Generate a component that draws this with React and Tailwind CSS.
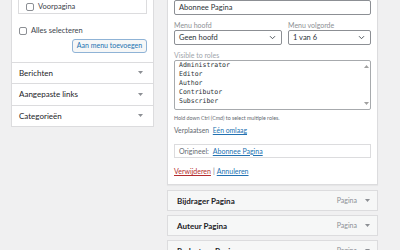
import React from 'react';

const font = { fontFamily: 'Lato, "Noto Sans", sans-serif' };

const Caret = () => (
  <svg width="5" height="3" viewBox="0 0 5 3">
    <path d="M0 0h5L2.5 3z" fill="#8c8f94" />
  </svg>
);

const Chevron = () => (
  <svg width="7" height="5" viewBox="0 0 7 5" fill="none">
    <path d="M1 1.2l2.5 2.5 2.5-2.5" stroke="#50575e" strokeWidth="1" />
  </svg>
);

const Box = () => (
  <span className="inline-block w-[8px] h-[8px] border border-[#8c8f94] rounded-[2px] bg-white shrink-0" />
);

const AccRow = ({ label }) => (
  <div className="flex items-center justify-between h-[21.5px] pl-[7px] pr-[10px] border-t border-[#dcdcde]">
    <span className="text-[8px] text-[#1d2327]">{label}</span>
    <Caret />
  </div>
);

const Item = ({ label }) => (
  <div className="flex items-center h-[21px] pl-[9px] pr-[7px] bg-[#f6f7f7] border border-[#dcdcde]">
    <span className="text-[8px] font-bold text-[#1d2327] flex-1">{label}</span>
    <span className="text-[7px] text-[#8c8f94] mr-[8px]">Pagina</span>
    <Caret />
  </div>
);

const roles = ['Administrator', 'Editor', 'Author', 'Contributor', 'Subscriber'];

export default function App() {
  return (
    <div className="w-[400px] h-[250px] overflow-hidden bg-[#f0f0f1] flex items-start" style={font}>
      <div className="ml-[11px] w-[143px] h-[127px] bg-white border-x border-b border-[#dcdcde] flex flex-col">
        <div className="mx-[6px] h-[18px] border-x border-b border-[#dcdcde] flex items-center pl-[7px] gap-[4px]">
          <Box />
          <span className="text-[7.5px] text-[#3c434a]">Voorpagina</span>
        </div>
        <div className="flex items-center gap-[4px] pl-[7px] mt-[11px]">
          <Box />
          <span className="text-[7.5px] text-[#3c434a]">Alles selecteren</span>
        </div>
        <div className="flex justify-end pr-[6px] mt-[2px]">
          <div className="h-[14px] w-[75px] flex items-center justify-center rounded-[3px] border border-[#8fb3d6] bg-[#f6f7f7] text-[7px] text-[#2271b1]">
            Aan menu toevoegen
          </div>
        </div>
        <div className="mt-[9px]">
          <AccRow label="Berichten" />
          <AccRow label="Aangepaste links" />
          <AccRow label="Categorieën" />
        </div>
      </div>

      <div className="ml-[13px] w-[211px] flex flex-col">
        <div className="bg-white border-x border-b border-[#dcdcde] px-[6px] pb-[8px] shadow-[0_1px_1px_rgba(0,0,0,0.04)]">
          <div className="h-[15px] border border-[#8c8f94] rounded-[2px] flex items-center pl-[4px] text-[7.5px] text-[#2c3338]">
            Abonnee Pagina
          </div>
          <div className="flex gap-[6px] mt-[5px]">
            <div className="w-[108px]">
              <div className="h-[10px] text-[7px] text-[#8c8f94] leading-[10px]">Menu hoofd</div>
              <div className="h-[15px] border border-[#8c8f94] rounded-[2px] flex items-center justify-between pl-[4px] pr-[5px] text-[7.5px] text-[#2c3338]">
                <span>Geen hoofd</span>
                <Chevron />
              </div>
            </div>
            <div className="flex-1">
              <div className="h-[10px] text-[7px] text-[#8c8f94] leading-[10px]">Menu volgorde</div>
              <div className="h-[15px] border border-[#8c8f94] rounded-[2px] flex items-center justify-between pl-[4px] pr-[5px] text-[7.5px] text-[#2c3338]">
                <span>1 van 6</span>
                <Chevron />
              </div>
            </div>
          </div>
          <div className="h-[10px] mt-[5px] text-[7px] text-[#a0a5aa] leading-[10px]">Visible to roles</div>
          <div className="h-[50px] border border-[#a7aaad] rounded-[2px] flex">
            <div className="flex-1 pl-[4px]" style={{ fontFamily: '"DejaVu Sans Mono", monospace' }}>
              {roles.map((r) => (
                <div key={r} className="text-[6.5px] leading-[9px] text-[#2c3338]">{r}</div>
              ))}
            </div>
            <div className="w-[8px] flex flex-col items-center justify-between py-[4px]">
              <svg width="5" height="3" viewBox="0 0 5 3"><path d="M0 3h5L2.5 0z" fill="#a0a0a0" /></svg>
              <svg width="5" height="3" viewBox="0 0 5 3"><path d="M0 0h5L2.5 3z" fill="#a0a0a0" /></svg>
            </div>
          </div>
          <div className="mt-[4px] text-[5.3px] leading-[8px] text-[#646970]">Hold down Ctrl (Cmd) to select multiple roles.</div>
          <div className="mt-[3px] text-[6.8px] leading-[10px] text-[#646970]">
            Verplaatsen <span className="ml-[2px] text-[#2271b1] underline">Eén omlaag</span>
          </div>
          <div className="mt-[9px] h-[14px] border border-[#dcdcde] flex items-center pl-[4px] text-[7px] text-[#646970]">
            Origineel: <span className="ml-[4px] text-[#2271b1] underline">Abonnee Pagina</span>
          </div>
          <div className="mt-[8px] text-[7px] leading-[10px]">
            <span className="text-[#b32d2e] underline">Verwijderen</span>
            <span className="text-[#646970] mx-[2px]">|</span>
            <span className="text-[#2271b1] underline">Annuleren</span>
          </div>
        </div>
        <div className="mt-[5px] flex flex-col gap-[4px]">
          <Item label="Bijdrager Pagina" />
          <Item label="Auteur Pagina" />
          <Item label="Redacteur Pagina" />
        </div>
      </div>
    </div>
  );
}
